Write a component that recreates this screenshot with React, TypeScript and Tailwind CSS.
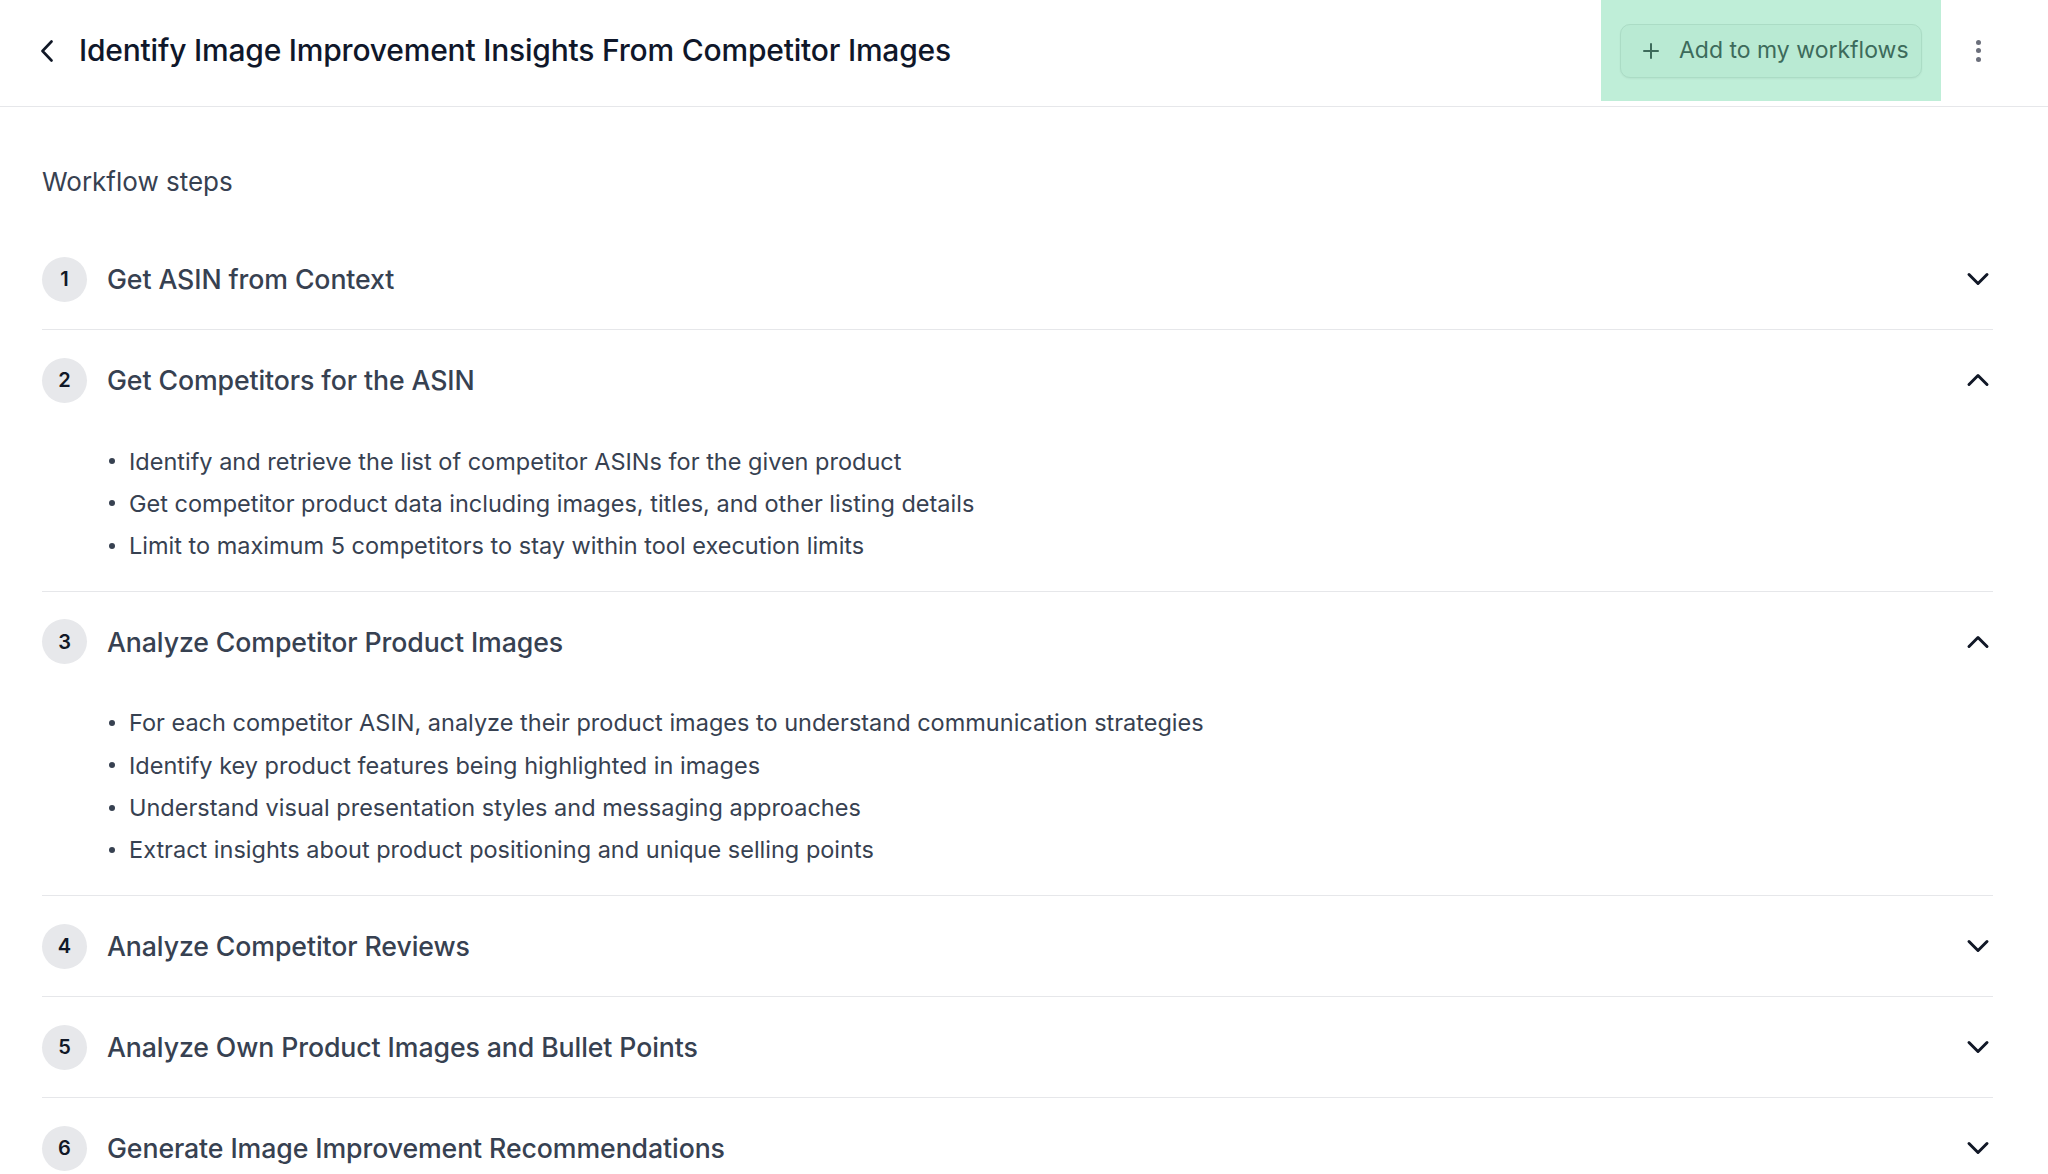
import { ChevronDown, ChevronUp, Plus } from "lucide-react";

type Step = {
  id: number;
  title: string;
  open: boolean;
  items: string[];
};

const steps: Step[] = [
  { id: 1, title: "Get ASIN from Context", open: false, items: [] },
  {
    id: 2,
    title: "Get Competitors for the ASIN",
    open: true,
    items: [
      "Identify and retrieve the list of competitor ASINs for the given product",
      "Get competitor product data including images, titles, and other listing details",
      "Limit to maximum 5 competitors to stay within tool execution limits",
    ],
  },
  {
    id: 3,
    title: "Analyze Competitor Product Images",
    open: true,
    items: [
      "For each competitor ASIN, analyze their product images to understand communication strategies",
      "Identify key product features being highlighted in images",
      "Understand visual presentation styles and messaging approaches",
      "Extract insights about product positioning and unique selling points",
    ],
  },
  { id: 4, title: "Analyze Competitor Reviews", open: false, items: [] },
  { id: 5, title: "Analyze Own Product Images and Bullet Points", open: false, items: [] },
  { id: 6, title: "Generate Image Improvement Recommendations", open: false, items: [] },
];

function StepRow({ step }: { step: Step }) {
  return (
    <div className="border-b border-[#e6e7ea]">
      <div className="h-[100px] flex items-center">
        <div className="w-[45px] h-[45px] rounded-full bg-[#e7e8eb] flex items-center justify-center text-[20px] font-semibold text-[#111827]">
          {step.id}
        </div>
        <h3 className="ml-[20px] flex-1 text-[26.7px] font-medium text-[#374151] tracking-[-0.1px]">
          {step.title}
        </h3>
        <div className="-mr-[3px] text-[#111827]">
          {step.open ? (
            <ChevronUp size={36} strokeWidth={2} />
          ) : (
            <ChevronDown size={36} strokeWidth={2} />
          )}
        </div>
      </div>
      {step.open && (
        <ul className="pt-[10px] pb-[24px] pl-[67px]">
          {step.items.map((item) => (
            <li key={item} className="flex items-center h-[42.3px] text-[23.5px] text-[#374151]">
              <span className="w-[6px] h-[6px] rounded-full bg-[#374151] mr-[14px]" />
              {item}
            </li>
          ))}
        </ul>
      )}
    </div>
  );
}

export default function App() {
  return (
    <div className="min-h-screen bg-white font-['Inter',sans-serif]">
      {/* Header */}
      <header className="h-[107px] border-b border-[#e6e7ea] pl-[41px] pr-[58px]">
        <div className="h-[101px] flex items-center">
          <svg width="12" height="22" viewBox="0 0 12 22" fill="none" className="text-[#111827]">
            <polyline
              points="10.5,1.5 1.5,11 10.5,20.5"
              stroke="currentColor"
              strokeWidth="2.6"
              strokeLinecap="round"
              strokeLinejoin="round"
            />
          </svg>
          <h1 className="ml-[26px] flex-1 text-[30px] font-medium text-[#0f172a] tracking-[-0.2px]">
            Identify Image Improvement Insights From Competitor Images
          </h1>
          <div className="h-full bg-[#bfeed8] px-[19px] flex items-center">
            <button className="h-[54px] w-[302px] rounded-[10px] border border-[#abdcc5] bg-[#b9ead3] shadow-[0_1px_2px_rgba(0,0,0,0.05)] flex items-center pl-[18px] gap-[16px] text-[23px] text-[#3d6b5b]">
              <Plus size={24} strokeWidth={2} />
              Add to my workflows
            </button>
          </div>
          <button className="ml-[25px] w-[24px] h-[30px] flex flex-col items-center justify-center gap-[3.5px]">
            <span className="w-[5px] h-[5px] rounded-full bg-[#6b6f7b]" />
            <span className="w-[5px] h-[5px] rounded-full bg-[#6b6f7b]" />
            <span className="w-[5px] h-[5px] rounded-full bg-[#6b6f7b]" />
          </button>
        </div>
      </header>

      {/* Steps */}
      <main className="pl-[42px] pr-[55px] pt-[59px]">
        <h2 className="text-[26px] text-[#374151] leading-[32px]">Workflow steps</h2>
        <div className="mt-[31px]">
          {steps.map((s) => (
            <StepRow key={s.id} step={s} />
          ))}
        </div>
      </main>
    </div>
  );
}
